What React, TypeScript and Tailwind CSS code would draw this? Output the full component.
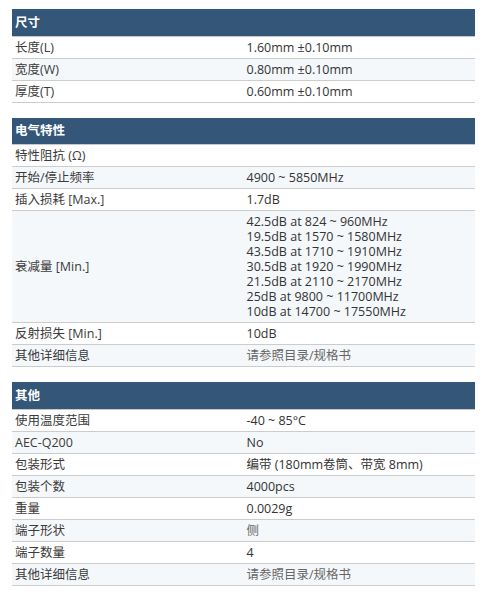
type Row = { label: string; value: string | string[]; muted?: boolean };
type Section = { title: string; rows: Row[] };

const sections: Section[] = [
  {
    title: "尺寸",
    rows: [
      { label: "长度(L)", value: "1.60mm ±0.10mm" },
      { label: "宽度(W)", value: "0.80mm ±0.10mm" },
      { label: "厚度(T)", value: "0.60mm ±0.10mm" },
    ],
  },
  {
    title: "电气特性",
    rows: [
      { label: "特性阻抗 (Ω)", value: "" },
      { label: "开始/停止频率", value: "4900 ~ 5850MHz" },
      { label: "插入损耗 [Max.]", value: "1.7dB" },
      {
        label: "衰减量 [Min.]",
        value: [
          "42.5dB at 824 ~ 960MHz",
          "19.5dB at 1570 ~ 1580MHz",
          "43.5dB at 1710 ~ 1910MHz",
          "30.5dB at 1920 ~ 1990MHz",
          "21.5dB at 2110 ~ 2170MHz",
          "25dB at 9800 ~ 11700MHz",
          "10dB at 14700 ~ 17550MHz",
        ],
      },
      { label: "反射损失 [Min.]", value: "10dB" },
      { label: "其他详细信息", value: "请参照目录/规格书", muted: true },
    ],
  },
  {
    title: "其他",
    rows: [
      { label: "使用温度范围", value: "-40 ~ 85°C" },
      { label: "AEC-Q200", value: "No" },
      { label: "包装形式", value: "编带 (180mm卷筒、带宽 8mm)" },
      { label: "包装个数", value: "4000pcs" },
      { label: "重量", value: "0.0029g" },
      { label: "端子形状", value: "侧", muted: true },
      { label: "端子数量", value: "4" },
      { label: "其他详细信息", value: "请参照目录/规格书", muted: true },
    ],
  },
];

function SpecTable({ section }: { section: Section }) {
  return (
    <table className="w-full border-collapse table-fixed text-[12.5px] leading-[15px]">
      <thead>
        <tr>
          <th
            colSpan={2}
            className="h-[27px] bg-[#345678] text-left text-white font-bold pl-[3px] border-b border-[#c8c8c8]"
          >
            {section.title}
          </th>
        </tr>
      </thead>
      <tbody>
        {section.rows.map((row, i) => (
          <tr key={i} className={i % 2 === 1 ? "bg-[#f5f8fb]" : "bg-white"}>
            <td className="w-1/2 align-middle pl-[3px] py-[3px] border-b border-[#cccccc] text-[#3a3a3a]">
              {row.label}
            </td>
            <td
              className={`align-middle pl-[3px] py-[3px] border-b border-[#cccccc] ${
                row.muted ? "text-[#666666]" : "text-[#333333]"
              }`}
            >
              {Array.isArray(row.value)
                ? row.value.map((v, j) => <div key={j}>{v}</div>)
                : row.value || "\u00a0"}
            </td>
          </tr>
        ))}
      </tbody>
    </table>
  );
}

export default function App() {
  return (
    <div
      className="bg-white w-[487px] min-h-[597px] px-3 pt-[9px] flex flex-col gap-[15px]"
      style={{ fontFamily: '"Open Sans", "Noto Sans CJK SC", sans-serif' }}
    >
      {sections.map((s) => (
        <SpecTable key={s.title} section={s} />
      ))}
    </div>
  );
}
